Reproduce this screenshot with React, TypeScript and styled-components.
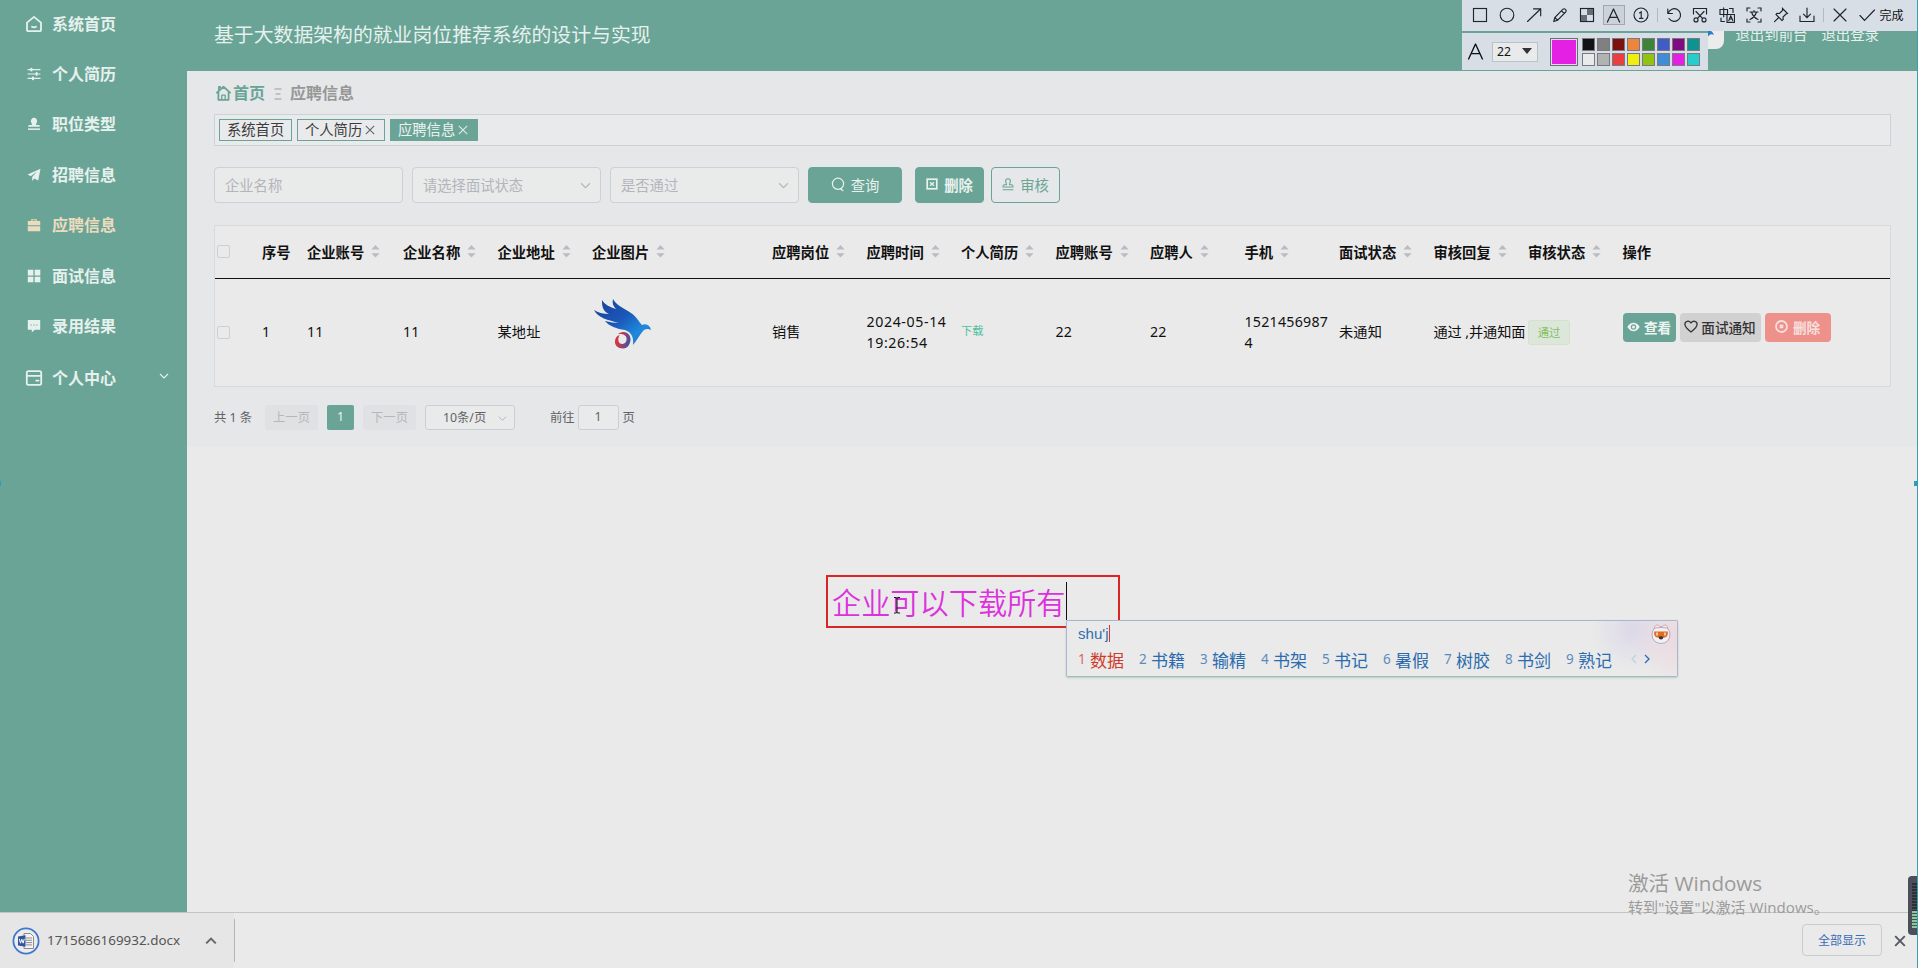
import React from "react";
import styled, { createGlobalStyle, css } from "styled-components";

const GREEN = "#6aa496";
const SANS = `"Noto Sans", "Noto Sans CJK SC", sans-serif`;

const GlobalStyle = createGlobalStyle`
  * { box-sizing: border-box; }
  body {
    margin: 0;
    background: #eaeaea;
    font-family: ${SANS};
    font-size: 14px;
    color: #111;
    overflow: hidden;
  }
`;

const Screen = styled.div`
  position: relative;
  width: 1918px;
  height: 968px;
  display: flex;
  flex-direction: column;
  overflow: hidden;
  background: #eaeaea;
`;

const Shell = styled.div`
  flex: none;
  height: 912px;
  display: flex;
`;

/* ---------- sidebar ---------- */

const Sidebar = styled.nav`
  width: 187px;
  background: ${GREEN};
  display: flex;
  flex-direction: column;
  padding-left: 25px;
`;

const MenuItem = styled.div<{ $active?: boolean; $last?: boolean }>`
  flex: none;
  height: ${(p) => (p.$last ? 53 : 50.4)}px;
  display: flex;
  align-items: center;
  gap: 9px;
  font-size: 16px;
  font-weight: 700;
  line-height: 24px;
  color: ${(p) => (p.$active ? "#ecdcbe" : "#e6f1ee")};
  &:first-child {
    margin-top: -1.5px;
  }
`;

const IconBox = styled.span<{ $size: number }>`
  flex: none;
  width: 18px;
  display: flex;
  justify-content: center;
  svg {
    width: ${(p) => p.$size}px;
    height: ${(p) => p.$size}px;
    display: block;
  }
`;

const MenuArrow = styled.span`
  margin-left: auto;
  margin-right: 18px;
  margin-top: -4px;
  display: flex;
`;

/* ---------- main area ---------- */

const Main = styled.div`
  flex: 1;
  min-width: 0;
  display: flex;
  flex-direction: column;
`;

const Header = styled.header`
  flex: none;
  height: 71px;
  background: ${GREEN};
  padding: 0 39px 2px 27px;
  display: flex;
  align-items: center;
  justify-content: space-between;
  color: #e6f1ee;
`;

const Title = styled.h1`
  margin: 0;
  font-size: 19.85px;
  font-weight: 400;
  line-height: 30px;
`;

const HeaderLinks = styled.div`
  display: flex;
  align-items: center;
  gap: 14px;
  font-size: 14.4px;
  line-height: 22px;
`;

const Avatar = styled.div`
  width: 44px;
  height: 46px;
  margin: -17px -3px 0 0;
  border-radius: 8px;
  background: #ececec;
  display: flex;
  justify-content: flex-end;
  align-items: flex-end;
  padding: 0 9px 9px 0;
`;

const Content = styled.section`
  flex: none;
  height: 376px;
  background: #e5e7e9;
  padding: 0 27px 0 27px;
  display: flex;
  flex-direction: column;
`;

const Breadcrumb = styled.div`
  height: 43px;
  display: flex;
  align-items: center;
  padding-left: 2px;
  font-size: 16px;
  font-weight: 700;
  line-height: 24px;
  color: #979797;
`;

const Crumb = styled.span`
  display: flex;
  align-items: center;
  gap: 2px;
  color: ${GREEN};
`;

const CrumbSep = styled.span`
  display: flex;
  margin: 2px 8px 0 9px;
`;

const TabBar = styled.div`
  height: 32px;
  border: 1px solid #cfd2d4;
  background: #e9eaeb;
  display: flex;
  align-items: center;
  gap: 5px;
  padding-left: 4px;
`;

const Tab = styled.div<{ $w: number; $active?: boolean }>`
  width: ${(p) => p.$w}px;
  height: 22px;
  border: 1px solid ${GREEN};
  padding: 0 0 0 7px;
  display: flex;
  align-items: center;
  gap: 3px;
  line-height: 20px;
  font-size: 14.3px;
  white-space: nowrap;
  background: ${(p) => (p.$active ? GREEN : "transparent")};
  color: ${(p) => (p.$active ? "#edf3f1" : "#3c3c3c")};
  svg { flex: none; color: ${(p) => (p.$active ? "#e0ebe8" : "#666")}; }
`;

const Filters = styled.div`
  margin-top: 21px;
  height: 36px;
  display: flex;
`;

const Field = styled.div`
  width: 189px;
  margin-right: 9px;
  border: 1px solid #cdd0d4;
  border-radius: 4px;
  background: #e9eaea;
  display: flex;
  align-items: center;
  justify-content: space-between;
  padding: 0 9px 2px 10px;
  font-size: 14.3px;
  color: #b2b5bb;
  svg { margin-top: 3px; }
`;

const Button = styled.button<{ $w: number; $gap?: number; $plain?: boolean; $bold?: boolean }>`
  width: ${(p) => p.$w}px;
  margin-right: ${(p) => p.$gap ?? 0}px;
  padding: 0 0 2px;
  border: 1px solid ${GREEN};
  border-radius: 4px;
  background: ${(p) => (p.$plain ? "transparent" : GREEN)};
  color: ${(p) => (p.$plain ? GREEN : "#e9f2ef")};
  font-family: inherit;
  font-size: 14.3px;
  font-weight: ${(p) => (p.$bold ? 700 : 400)};
  display: flex;
  align-items: center;
  justify-content: center;
  gap: 6px;
`;

/* ---------- table ---------- */

const Table = styled.div`
  margin-top: 22px;
  height: 162px;
  border: 1px solid #d6dadd;
  background: #eaeaea;
`;

const rowColumns = css`
  display: grid;
  grid-template-columns: 47px 45px 96px 94.5px 94.5px 180px repeat(9, 94.5px) 1fr;
  align-items: center;
`;

const HeadRow = styled.div`
  ${rowColumns}
  height: 53px;
  padding-bottom: 2px;
  border-bottom: 1px solid #111;
  font-weight: 600;
  font-size: 14.3px;
  color: #111;
`;

const HeadCell = styled.div`
  display: flex;
  align-items: center;
  gap: 7px;
  white-space: nowrap;
`;

const BodyRow = styled.div`
  ${rowColumns}
  height: 107px;
  line-height: 21px;
  font-size: 14.2px;
`;

const Cell = styled.div<{ $spacing?: number }>`
  margin-top: -2px;
  white-space: nowrap;
  letter-spacing: ${(p) => p.$spacing ?? 0.15}px;
`;

const Bird = styled.div`
  display: flex;
  margin-top: -17px;
`;

const Checkbox = styled.span`
  display: block;
  width: 13px;
  height: 13px;
  margin-left: 2px;
  border: 1px solid #cccfd5;
  border-radius: 2px;
`;

const Download = styled.a`
  font-size: 11.2px;
  color: #4fc09c;
  display: block;
  margin-top: -4px;
`;

const Tag = styled.span`
  width: 42px;
  height: 25px;
  border: 1px solid #d3e2cb;
  border-radius: 3px;
  background: #dde6da;
  color: #82c25f;
  font-size: 11.3px;
  display: flex;
  align-items: center;
  justify-content: center;
  padding-bottom: 1px;
`;

const Actions = styled.div`
  display: flex;
  gap: 4px;
  margin-top: -10px;
`;

const tones = {
  green: { bg: GREEN, fg: "#edf4f2", weight: 700 },
  grey: { bg: "#d1d1d1", fg: "#333", weight: 500 },
  red: { bg: "#ee918b", fg: "#f7dfdd", weight: 700 },
};

const ActionButton = styled.button<{ $tone: keyof typeof tones; $w: number; $gap: number }>`
  width: ${(p) => p.$w}px;
  height: 29px;
  padding: 0 0 2px;
  border: 0;
  border-radius: 4px;
  background: ${(p) => tones[p.$tone].bg};
  color: ${(p) => tones[p.$tone].fg};
  font-family: inherit;
  font-size: 13.6px;
  font-weight: ${(p) => tones[p.$tone].weight};
  display: flex;
  align-items: center;
  justify-content: center;
  gap: ${(p) => p.$gap}px;
  white-space: nowrap;
`;

/* ---------- pagination ---------- */

const Pagination = styled.div`
  margin-top: 18px;
  height: 25px;
  display: flex;
  align-items: center;
  font-size: 12.3px;
  color: #5f6266;
  white-space: nowrap;
`;

const PageLabel = styled.span<{ $w?: number }>`
  ${(p) => p.$w && `width: ${p.$w}px;`}
  padding-bottom: 2px;
`;

const PageButton = styled.span<{ $w: number; $current?: boolean }>`
  width: ${(p) => p.$w}px;
  height: 25px;
  margin-right: 9px;
  padding-bottom: 2px;
  border-radius: 2px;
  background: ${(p) => (p.$current ? GREEN : "#e0e1e3")};
  color: ${(p) => (p.$current ? "#eef4f2" : "#b4b7bb")};
  display: flex;
  align-items: center;
  justify-content: center;
`;

const PageSize = styled.span`
  width: 90px;
  height: 25px;
  margin-right: 35px;
  border: 1px solid #ccced6;
  border-radius: 3px;
  background: #e9eaea;
  display: flex;
  align-items: center;
  justify-content: space-between;
  padding: 0 7px 2px 17px;
  svg { margin-top: 3px; }
`;

const PageInput = styled.span`
  width: 41px;
  height: 25px;
  margin: 0 4px 0 3px;
  padding-bottom: 2px;
  border: 1px solid #ccced6;
  border-radius: 3px;
  background: #e9eaea;
  display: flex;
  align-items: center;
  justify-content: center;
`;

/* ---------- browser download shelf ---------- */

const Shelf = styled.footer`
  flex: 1;
  border-top: 1px solid #c4c4c4;
  display: flex;
  align-items: center;
  background: #eaeaea;
`;

const ShelfItem = styled.div`
  height: 100%;
  width: 234px;
  padding-left: 12px;
  background: #e6e6e6;
  display: flex;
  align-items: center;
  font-size: 13.4px;
  color: #555;
`;

const FileName = styled.span`
  width: 132px;
  margin: 0 26px 1px 7px;
  white-space: nowrap;
`;

const ShelfDivider = styled.span`
  width: 1px;
  height: 43px;
  background: #b5b5b5;
`;

const ShowAll = styled.button`
  width: 80px;
  height: 32px;
  margin: 0 12px 1px auto;
  padding: 0 0 1px;
  border: 1px solid #c9ccd0;
  border-radius: 4px;
  background: transparent;
  color: #3a6cb8;
  font-family: inherit;
  font-size: 12px;
`;

const CloseShelf = styled.span`
  display: flex;
  margin-right: 12px;
`;

/* ---------- screen capture overlay ---------- */

const CaptureTools = styled.div`
  position: absolute;
  top: 0;
  left: 1462px;
  width: 455px;
  display: flex;
  flex-direction: column;
  align-items: flex-start;
`;

const ToolRow = styled.div`
  width: 455px;
  height: 31px;
  background: #d8dee6;
  display: flex;
  align-items: center;
  padding: 0 0 1px 4.6px;
  color: #1e2430;
`;

const Tool = styled.span<{ $on?: boolean }>`
  width: 22px;
  height: 20px;
  margin: 0 2.4px;
  display: flex;
  align-items: center;
  justify-content: center;
  border: 1px solid ${(p) => (p.$on ? "#a3a8ae" : "transparent")};
  background: ${(p) => (p.$on ? "#cdd2d8" : "transparent")};
  svg { flex: none; }
`;

const ToolSep = styled.span`
  width: 1px;
  height: 14px;
  margin: 0 2.5px 0 2.6px;
  background: #b3b9c2;
`;

const DoneLabel = styled.span`
  font-size: 12px;
  color: #111;
  white-space: nowrap;
  margin: 0 0 1px -1px;
`;

const ToolGap = styled.div`
  width: 246px;
  height: 2px;
  background: ${GREEN};
`;

const StyleRow = styled.div`
  width: 246px;
  height: 37px;
  background: #d8dee6;
  display: flex;
  align-items: center;
  padding-left: 5px;
`;

const SizeSelect = styled.div`
  width: 46px;
  height: 20px;
  margin: 0 12px 0 8px;
  padding: 0 5px 1px 4px;
  border: 1px solid #bcc1c7;
  background: #e8eaec;
  display: flex;
  align-items: center;
  justify-content: space-between;
  font-size: 12.2px;
  color: #111;
`;

const CurrentColor = styled.span`
  width: 28px;
  height: 28px;
  margin-right: 4px;
  border: 1px solid #6c7076;
  padding: 1px;
  background: #e520e5;
  background-clip: content-box;
`;

const Palette = styled.div`
  display: grid;
  grid-template-columns: repeat(8, 13px);
  gap: 2px;
`;

const Swatch = styled.span<{ $c: string }>`
  height: 13px;
  border: 1px solid #777b81;
  background: ${(p) => p.$c};
`;

const TextAnnotation = styled.div`
  position: absolute;
  left: 826px;
  top: 575px;
  width: 294px;
  height: 53px;
  border: 2px solid #db2525;
  padding: 0 0 2px 4px;
  display: flex;
  align-items: center;
  font-family: "Noto Sans CJK SC", sans-serif;
  font-size: 29.2px;
  font-weight: 350;
  color: #dc32dc;
  white-space: nowrap;
`;

const Caret = styled.span`
  width: 1px;
  height: 38px;
  background: #111;
`;

const TextCursor = styled.svg`
  position: absolute;
  left: 893px;
  top: 597px;
`;

/* ---------- input method window ---------- */

const Ime = styled.div`
  position: absolute;
  left: 1066px;
  top: 620px;
  width: 612px;
  height: 57px;
  border: 1px solid #a9b6cc;
  border-bottom-color: #a3bdb9;
  border-radius: 2px;
  background:
    radial-gradient(circle at 612px 18px, rgba(236, 214, 222, 0.9) 0, rgba(234, 234, 234, 0) 46px),
    radial-gradient(circle at 566px 8px, #dcd8e8 0, #eaeaea 42px);
  box-shadow: 0 1px 2px rgba(90, 120, 130, 0.3);
  padding: 1px 0 0 11px;
`;

const Composing = styled.div`
  height: 22px;
  display: flex;
  align-items: center;
  font-family: "Liberation Sans", sans-serif;
  font-size: 15.1px;
  color: #2f6fae;
`;

const ImeCaret = styled.span`
  width: 1px;
  height: 17px;
  background: #d33;
`;

const Candidates = styled.div`
  height: 30px;
  display: flex;
  align-items: center;
`;

const Candidate = styled.span<{ $first?: boolean }>`
  width: 61px;
  display: flex;
  align-items: center;
  gap: 4px;
  font-size: 17px;
  white-space: nowrap;
  color: ${(p) => (p.$first ? "#cf3b2b" : "#2a6cae")};
`;

const CandidateNo = styled.span`
  width: 8px;
  font-size: 13.5px;
  opacity: 0.75;
`;

const ImeLogo = styled.svg`
  position: absolute;
  right: 6px;
  top: 2px;
`;

/* ---------- desktop pieces ---------- */

const Watermark = styled.div`
  position: absolute;
  left: 1628px;
  top: 867px;
  color: #9b9b9b;
  font-family: "Open Sans", "Noto Sans CJK SC", sans-serif;
  white-space: nowrap;
`;

const WatermarkTitle = styled.div`
  font-size: 20.6px;
  line-height: 32px;
`;

const WatermarkText = styled.div`
  font-size: 15.1px;
  line-height: 17px;
`;

const Meter = styled.div`
  position: absolute;
  left: 1908px;
  top: 876px;
  width: 12px;
  height: 59px;
  border-radius: 4px 0 0 4px;
  background: #4c4f5a;
  padding: 6px 3px 6px 4px;
`;

const MeterBars = styled.div`
  height: 47px;
  background: repeating-linear-gradient(#4c4f5a 0 1px, #2c2e38 1px 3px);
  display: flex;
  align-items: flex-end;
`;

const MeterLevel = styled.div`
  width: 100%;
  height: 18px;
  background: repeating-linear-gradient(#8cc89a 0 2px, #4c4f5a 2px 3px);
`;

const EdgeLine = styled.div`
  position: absolute;
  right: 0;
  top: 0;
  width: 1px;
  height: 968px;
  background: #3a9fb4;
`;

const Handle = styled.div<{ $right?: boolean }>`
  position: absolute;
  top: 481px;
  ${(p) => (p.$right ? "right: 0; width: 4px;" : "left: 0; width: 1px;")}
  height: 5px;
  background: #2a9fb8;
`;

/* ---------- icons ---------- */

const line = { fill: "none", stroke: "currentColor", strokeLinecap: "round", strokeLinejoin: "round" } as const;

const HomeIcon = () => (
  <svg viewBox="0 0 18 18" {...line} strokeWidth="1.8">
    <path d="M2 7.6 9 1.900l7 5.700v7.300q0 1.300-1.300 1.300H3.300Q2 16.200 2 14.900z" />
    <path d="M7 11.800q2 1.200 4 0" />
  </svg>
);
const SlidersIcon = () => (
  <svg viewBox="0 0 14 14" {...line} strokeWidth="1.2">
    <path d="M1 2.600h12M1 7h12M1 11.400h12" />
    <path d="M4.400 1.800v1.600M9.600 6.200v1.600M6 10.600v1.600" strokeWidth="2.200" />
  </svg>
);
const StampIcon = () => (
  <svg viewBox="0 0 14 14" fill="currentColor">
    <path d="M7 .8a3.200 3.200 0 0 1 3 4.200C9.600 6.300 9 6.600 9 8h2.600Q13 8 13 9.800H1Q1 8 2.400 8H5c0-1.400-.6-1.700-1-3A3.200 3.200 0 0 1 7 .8z" />
    <path d="M1 11.400h12v1.500H1z" />
  </svg>
);
const PlaneIcon = () => (
  <svg viewBox="0 0 14 14" fill="currentColor">
    <path d="M13.500.8.600 6.500l3.100 1.700 6.400-4.800-4.900 5.500v4.100l2.200-2.400 3.800 2z" />
  </svg>
);
const CaseIcon = () => (
  <svg viewBox="0 0 14 14" fill="currentColor">
    <path d="M4.200 3V1.200h5.600V3h3.400v4.200H.8V3zM5.400 3h3.200v-.7H5.400zM.8 8.200h12.400v5H.8z" />
  </svg>
);
const GridIcon = () => (
  <svg viewBox="0 0 14 14" fill="currentColor">
    <path d="M.8.8h5.600v5.600H.8zM7.700.8h5.600v5.600H7.700zM.8 7.700h5.600v5.600H.8zM7.700 7.700h5.600v5.600H7.700z" />
  </svg>
);
const ChatIcon = () => (
  <svg viewBox="0 0 14 14">
    <path d="M.8 1h12.400v9.800H7.800L4.800 13.600v-2.800h-4z" fill="currentColor" />
    <path d="M3.600 6h1.200M6.400 6h1.200M9.200 6h1.200" stroke={GREEN} strokeWidth="1.200" />
  </svg>
);
const WalletIcon = () => (
  <svg viewBox="0 0 18 18" {...line} strokeWidth="1.800">
    <rect x="1.800" y="2.200" width="14.400" height="13.600" rx="1.600" />
    <path d="M2 6.800h14M11.200 11.600h2.400" />
  </svg>
);
const Chevron = ({ size, color = "#b3b6bc", up }: { size: number; color?: string; up?: boolean }) => (
  <svg width={size} height={size} viewBox="0 0 10 10" fill="none" stroke={color} strokeWidth={up ? 1.7 : 1.1}>
    <path d={up ? "M1 7l4-4 4 4" : "M1 3l4 4 4-4"} />
  </svg>
);
const CrumbHome = () => (
  <svg width="15" height="16" viewBox="0 0 15 16" {...line} strokeWidth="1.800">
    <path d="M.9 7.600 7.500 1.800l6.600 5.800M2.400 7v7.800h10.200V7M2.900 4.800V2h1.400" />
    <path d="M5.800 14.500v-4.300h3.400v4.300" strokeWidth="1.300" />
  </svg>
);
const CloseIcon = ({ size, w = 1.1 }: { size: number; w?: number }) => (
  <svg width={size} height={size} viewBox="0 0 10 10" fill="none" stroke="currentColor" strokeWidth={w}>
    <path d="M.8.8l8.400 8.400M9.200.8.800 9.200" />
  </svg>
);
const SortIcon = () => (
  <svg width="9" height="13" viewBox="0 0 9 13" fill="#b9bcc2">
    <path d="M4.500 0 8.600 4.400H.4zM.4 8.200h8.200L4.500 12.600z" />
  </svg>
);
const SearchIcon = () => (
  <svg width="14" height="15" viewBox="0 0 14 15" {...line} strokeWidth="1.200">
    <circle cx="7" cy="6.800" r="5.600" />
    <path d="M9.500 11.800l2.400 1.900" />
  </svg>
);
const DeleteSquare = () => (
  <svg width="12" height="12" viewBox="0 0 12 12" fill="none" stroke="currentColor" strokeWidth="1.700">
    <rect x="1.200" y="1.200" width="9.600" height="9.600" />
    <path d="M4 4.200l4 3.600M8 4.200 4 7.800" strokeWidth="1.300" />
  </svg>
);
const StampLine = () => (
  <svg width="12" height="13" viewBox="0 0 12 13" {...line} strokeWidth="1.100">
    <path d="M4.500 6.800C4.500 5 3.600 4.800 3.600 3.200a2.400 2.400 0 0 1 4.800 0c0 1.600-.9 1.800-.9 3.600H10q1 0 1 2.200H1q0-2.200 1-2.200zM1 11.800h10" />
  </svg>
);
const EyeIcon = () => (
  <svg width="13" height="10" viewBox="0 0 13 10">
    <path d="M.3 5Q3 .8 6.500.8T12.700 5Q10 9.200 6.500 9.200T.3 5z" fill="currentColor" />
    <circle cx="6.500" cy="5" r="2.700" fill={GREEN} />
    <circle cx="6.500" cy="5" r="1.500" fill="currentColor" />
  </svg>
);
const HeartIcon = () => (
  <svg width="14" height="13" viewBox="0 0 14 13" {...line} strokeWidth="1.300">
    <path d="M7 12C3 9 .9 6.800.9 4.300.9 1 5 0 7 3c2-3 6.100-2 6.100 1.300C13.100 6.800 11 9 7 12z" />
  </svg>
);
const CircleIcon = () => (
  <svg width="13" height="13" viewBox="0 0 13 13" fill="none" stroke="currentColor" strokeWidth="1.800">
    <circle cx="6.500" cy="6.500" r="5.500" />
    <path d="M5 5l3 3M8 5 5 8" />
  </svg>
);
const BirdLogo = () => (
  <svg width="60" height="52" viewBox="0 0 60 52">
    <defs>
      <linearGradient id="wing" x1="0" y1="0" x2="1" y2="1">
        <stop offset="0" stopColor="#1a3f96" />
        <stop offset="0.450" stopColor="#1b57b8" />
        <stop offset="0.750" stopColor="#1f8ade" />
        <stop offset="1" stopColor="#2a5fb0" />
      </linearGradient>
      <linearGradient id="tail" x1="0" y1="0" x2="1" y2="0.300">
        <stop offset="0" stopColor="#d83545" />
        <stop offset="0.450" stopColor="#c8384f" />
        <stop offset="1" stopColor="#4a50a0" />
      </linearGradient>
    </defs>
    <path
      d="M21 1c4 7 11 9 18 14 6 4 8 9 11 12 4-2 8 0 9 5-4-2-6-1-8 1-4 5-6 9-10 14 1-8-2-13-8-15-8-1-16-4-20-9 5 1 9 2 14 2C16 22 6 20 2 12c5 3 10 4 15 4C10 13 10 7 10 2c3 5 8 7 14 9-3-3-4-6-3-10z"
      fill="url(#wing)"
    />
    <path
      d="M26 36C33 31 39 36 38.500 42 38 47 35 50.500 31 50.500c-5 0-8.500-3-8-7.500.3-3 2-5.500 4.500-6-1 2.500-1.500 4-1 6 .5 2 2 3.200 4 3 3-.5 4.500-3 4-6-.5-3-4-4.500-8.500-4z"
      fill="url(#tail)"
    />
  </svg>
);
const WordIcon = () => (
  <svg width="28" height="28" viewBox="0 0 28 28">
    <circle cx="14" cy="14" r="12.600" fill="#ececec" stroke="#3f78cc" strokeWidth="1.800" />
    <path d="M12 6.500h6.500l3 3V21.500H12z" fill="#f3f3f3" stroke="#8c8c90" strokeWidth="1" />
    <path d="M14 11h6M14 13.300h6M14 15.600h6M14 17.900h6" stroke="#8b8d96" strokeWidth="1" />
    <path d="M6 9.500l7.500-1.300v11.600L6 18.500z" fill="#31549c" />
    <path d="M7.300 11.800l1.200 4.400 1.300-4 1.300 4 1.200-4.400" fill="none" stroke="#fff" strokeWidth="1" />
  </svg>
);

const TextGlyph = ({ size }: { size: number }) => (
  <svg width={size} height={size} viewBox="0 0 16 16" {...line} strokeWidth="1.300">
    <path d="M1.500 15 8 1l6.500 14M4 10h8" />
  </svg>
);

const toolPaths: Record<string, React.ReactNode> = {
  rect: <rect x="1.500" y="1.500" width="13" height="13" />,
  circle: <circle cx="8" cy="8" r="6.800" />,
  arrow: <path d="M1.500 14.500l13-12.500M7.500 1.800h7.200v7" />,
  pencil: <path d="M1.800 14.300l1-3.800L11 2.200q1.200-1 2.500.2t.3 2.600L5.600 13.200zM2.800 10.500l2.800 2.700M9.500 3.800l2.800 2.700" />,
  mosaic: (
    <>
      <rect x="1.500" y="1.500" width="13" height="13" />
      <path d="M8 2h6v6H8zM2 8h6v6H2z" fill="#666c78" stroke="none" />
    </>
  ),
  number: (
    <>
      <circle cx="8" cy="8" r="7" />
      <path d="M6.500 6 8.200 4.800v6.400M6.500 11.300H10" />
    </>
  ),
  undo: <path d="M1.800 2v4.500h4.600M2.200 6.300A6.300 6.300 0 1 1 3 11.500" />,
  cut: (
    <>
      <path d="M1.500 7V1.500h13V7M4 4.500l6.500 6.800M12 4.500l-6.500 6.800" />
      <circle cx="4" cy="12.900" r="2" />
      <circle cx="12" cy="12.900" r="2" />
    </>
  ),
  translate: (
    <>
      <path d="M1 2.500h7.500v5H1zM4.700.8v9M10.500 1.500h3.500v4M2 11v3.500h3.500" />
      <path d="M8 7.500h7.500v7.800H8zM9.800 13.500l2-4.500 2 4.500M10.500 12h2.600" />
    </>
  ),
  ocr: (
    <>
      <path d="M1 4V1h3M12 1h3v3M15 12v3h-3M4 15H1v-3" />
      <path d="M4 5h8M8 3.500V5M10.500 5Q9 10 4 12.500M5.500 5Q7 10 12 12.500" />
    </>
  ),
  pin: <path d="M9.500 1.500l5 5-1.500.5-3 3 .2 2.500-1.200 1L3 7.500l1-1.200 2.500.2 3-3zM5.800 10.500 1.500 14.700" />,
  download: <path d="M1 9v5.500h14V9M8 1v9.500M4.500 7.200 8 10.700l3.500-3.500" />,
  close: <path d="M2 2l12 12M14 2 2 14" />,
  check: <path d="M1 8.500l4.500 5L15.500 3" />,
};

const ToolIcon = ({ name }: { name: string }) => (
  <svg width="16" height="16" viewBox="0 0 16 16" {...line} strokeWidth="1.150" strokeLinejoin="miter">
    {toolPaths[name]}
  </svg>
);

/* ---------- data ---------- */

const menu = [
  { label: "系统首页", icon: <HomeIcon />, size: 18 },
  { label: "个人简历", icon: <SlidersIcon />, size: 14 },
  { label: "职位类型", icon: <StampIcon />, size: 14 },
  { label: "招聘信息", icon: <PlaneIcon />, size: 14 },
  { label: "应聘信息", icon: <CaseIcon />, size: 14, active: true },
  { label: "面试信息", icon: <GridIcon />, size: 14 },
  { label: "录用结果", icon: <ChatIcon />, size: 14 },
  { label: "个人中心", icon: <WalletIcon />, size: 18, expandable: true },
];

const sortable = [
  "企业账号", "企业名称", "企业地址", "企业图片", "应聘岗位", "应聘时间", "个人简历",
  "应聘账号", "应聘人", "手机", "面试状态", "审核回复", "审核状态",
];

const swatches = [
  "#111214", "#808080", "#7f1010", "#ee853c", "#3d8439", "#3f5cc9", "#7f0c80", "#0e9390",
  "#e8eaec", "#b2b2b2", "#ec3d3f", "#eeee10", "#92c212", "#3f8cd8", "#e520e5", "#27cdcd",
];

const words = ["数据", "书籍", "输精", "书架", "书记", "暑假", "树胶", "书剑", "熟记"];

export default function App() {
  return (
    <>
      <GlobalStyle />
      <Screen>
        <Shell>
          <Sidebar>
            {menu.map((m) => (
              <MenuItem key={m.label} $active={m.active} $last={m.expandable}>
                <IconBox $size={m.size}>{m.icon}</IconBox>
                {m.label}
                {m.expandable && (
                  <MenuArrow>
                    <Chevron size={10} color="#e6f1ee" />
                  </MenuArrow>
                )}
              </MenuItem>
            ))}
          </Sidebar>

          <Main>
            <Header>
              <Title>基于大数据架构的就业岗位推荐系统的设计与实现</Title>
              <HeaderLinks>
                <Avatar>
                  <svg width="20" height="14" viewBox="0 0 20 14">
                    <path d="M0 3h10c5 0 8 3 9 6-3-2-5 0-7 3 0-4-2-5-6-6z" fill="#2a7fc8" />
                  </svg>
                </Avatar>
                <span>退出到前台</span>
                <span>退出登录</span>
              </HeaderLinks>
            </Header>

            <Content>
              <Breadcrumb>
                <Crumb>
                  <CrumbHome />
                  首页
                </Crumb>
                <CrumbSep>
                  <svg width="8" height="12" viewBox="0 0 8 12" stroke="#b3b5b9" strokeWidth="1.400">
                    <path d="M.5 1h7M1.500 6h5M.5 11h7" />
                  </svg>
                </CrumbSep>
                <span>应聘信息</span>
              </Breadcrumb>

              <TabBar>
                <Tab $w={73}>系统首页</Tab>
                <Tab $w={88}>个人简历<CloseIcon size={10} /></Tab>
                <Tab $w={88} $active>应聘信息<CloseIcon size={10} /></Tab>
              </TabBar>

              <Filters>
                <Field>企业名称</Field>
                <Field>请选择面试状态<Chevron size={11} /></Field>
                <Field>是否通过<Chevron size={11} /></Field>
                <Button $w={94} $gap={13}><SearchIcon />查询</Button>
                <Button $w={69} $gap={7} $bold><DeleteSquare />删除</Button>
                <Button $w={69} $plain><StampLine />审核</Button>
              </Filters>

              <Table>
                <HeadRow>
                  <Checkbox />
                  <HeadCell>序号</HeadCell>
                  {sortable.map((s) => (
                    <HeadCell key={s}>{s}<SortIcon /></HeadCell>
                  ))}
                  <HeadCell>操作</HeadCell>
                </HeadRow>
                <BodyRow>
                  <Checkbox />
                  <Cell>1</Cell>
                  <Cell>11</Cell>
                  <Cell>11</Cell>
                  <Cell>某地址</Cell>
                  <Bird><BirdLogo /></Bird>
                  <Cell>销售</Cell>
                  <Cell $spacing={0.6}>2024-05-14<br />19:26:54</Cell>
                  <Download>下载</Download>
                  <Cell>22</Cell>
                  <Cell>22</Cell>
                  <Cell $spacing={0.25}>1521456987<br />4</Cell>
                  <Cell>未通知</Cell>
                  <Cell $spacing={-0.1}>通过 ,并通知面</Cell>
                  <Tag>通过</Tag>
                  <Actions>
                    <ActionButton $tone="green" $w={53} $gap={4}><EyeIcon />查看</ActionButton>
                    <ActionButton $tone="grey" $w={81} $gap={3}><HeartIcon />面试通知</ActionButton>
                    <ActionButton $tone="red" $w={66} $gap={5}><CircleIcon />删除</ActionButton>
                  </Actions>
                </BodyRow>
              </Table>

              <Pagination>
                <PageLabel $w={51}>共 1 条</PageLabel>
                <PageButton $w={53}>上一页</PageButton>
                <PageButton $w={27} $current>1</PageButton>
                <PageButton $w={53}>下一页</PageButton>
                <PageSize>10条/页<Chevron size={9} /></PageSize>
                <PageLabel>前往</PageLabel>
                <PageInput>1</PageInput>
                <PageLabel>页</PageLabel>
              </Pagination>
            </Content>
          </Main>
        </Shell>

        <Shelf>
          <ShelfItem>
            <WordIcon />
            <FileName>1715686169932.docx</FileName>
            <Chevron size={12} color="#666" up />
          </ShelfItem>
          <ShelfDivider />
          <ShowAll>全部显示</ShowAll>
          <CloseShelf>
            <svg width="12" height="12" viewBox="0 0 12 12" stroke="#555960" strokeWidth="1.900">
              <path d="M1.200 1.200l9.600 9.600M10.800 1.200l-9.600 9.600" />
            </svg>
          </CloseShelf>
        </Shelf>

        <TextAnnotation>
          企业可以下载所有
          <Caret />
        </TextAnnotation>
        <TextCursor width="8" height="17" viewBox="0 0 8 17" stroke="#111" fill="none">
          <path d="M1 .5h2l1 .6 1-.6h2M4 1v14.500M1 16h2l1-.6 1 .6h2" />
        </TextCursor>

        <Ime>
          <Composing>shu'j<ImeCaret /></Composing>
          <Candidates>
            {words.map((w, i) => (
              <Candidate key={w} $first={i === 0}>
                <CandidateNo>{i + 1}</CandidateNo>
                {w}
              </Candidate>
            ))}
            <svg width="24" height="12" viewBox="0 0 24 12" fill="none" strokeWidth="1.300">
              <path d="M9 2 5 6l4 4" stroke="#c6d0dc" />
              <path d="M18 2l4 4-4 4" stroke="#2a6cae" />
            </svg>
          </Candidates>
          <ImeLogo width="20" height="22" viewBox="0 0 20 22">
            <path d="M3 8q0-6 3-6 2 0 2.500 1.500h3Q12 2 14 2q3 0 3 6" fill="#f3eeee" stroke="#e0a3aa" strokeWidth="1" />
            <path d="M1 11q.5-4.500 3-6 6-1 12 0 2.500 1.500 3 6 0 9-9 9.500Q1 20 1 11z" fill="#f1f1f4" stroke="#b3abc6" strokeWidth="1" />
            <path d="M3.200 8.500h13.600q.6 5-2.800 6H6q-3.400-1-2.800-6z" fill="#e36a1e" />
            <path d="M6 9.500v3M14 9.500v3" stroke="#f3e6da" strokeWidth="1.500" />
            <path d="M7.500 14q2.500-1.500 5 0-.5 2.500-2.500 2.500t-2.500-2.500z" fill="#3a3434" />
          </ImeLogo>
        </Ime>

        <Watermark>
          <WatermarkTitle>激活 Windows</WatermarkTitle>
          <WatermarkText>转到"设置"以激活 Windows。</WatermarkText>
        </Watermark>

        <CaptureTools>
          <ToolRow>
            {["rect", "circle", "arrow", "pencil", "mosaic"].map((n) => (
              <Tool key={n}><ToolIcon name={n} /></Tool>
            ))}
            <Tool $on><TextGlyph size={15} /></Tool>
            <Tool><ToolIcon name="number" /></Tool>
            <ToolSep />
            {["undo", "cut", "translate", "ocr", "pin", "download"].map((n) => (
              <Tool key={n}><ToolIcon name={n} /></Tool>
            ))}
            <ToolSep />
            <Tool><ToolIcon name="close" /></Tool>
            <Tool><ToolIcon name="check" /></Tool>
            <DoneLabel>完成</DoneLabel>
          </ToolRow>
          <ToolGap />
          <StyleRow>
            <TextGlyph size={17} />
            <SizeSelect>
              22
              <svg width="10" height="6" viewBox="0 0 10 6"><path d="M0 0h10L5 6z" fill="#333" /></svg>
            </SizeSelect>
            <CurrentColor />
            <Palette>
              {swatches.map((c) => <Swatch key={c} $c={c} />)}
            </Palette>
          </StyleRow>
        </CaptureTools>

        <Meter>
          <MeterBars><MeterLevel /></MeterBars>
        </Meter>
        <EdgeLine />
        <Handle />
        <Handle $right />
      </Screen>
    </>
  );
}
